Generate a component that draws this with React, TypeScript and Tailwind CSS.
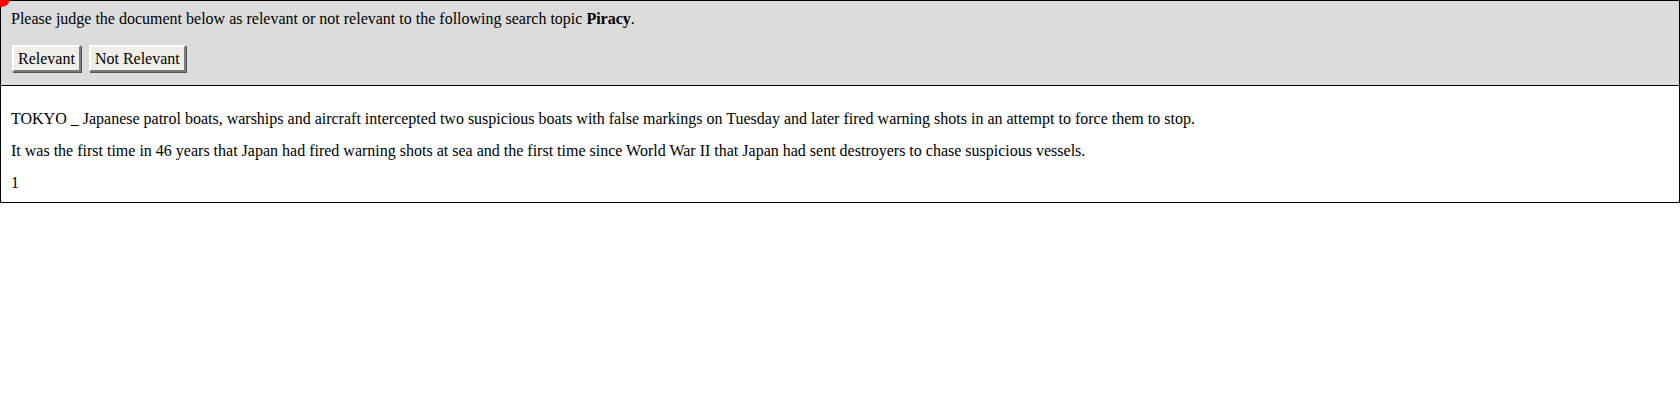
import React from "react";

export default function App() {
  const btn =
    "bg-[#f0ede8] text-black text-[16px] leading-[19px] px-[4px] pt-[2px] pb-[2px] border-2 border-t-[#ffffff] border-l-[#ffffff] border-b-[#7a7a7a] border-r-[#7a7a7a] shadow-[1px_1px_0_#555]";
  return (
    <div className="relative w-[1680px] text-black" style={{ fontFamily: '"Liberation Serif", "Times New Roman", serif' }}>
      <div className="absolute left-[-7px] top-[-10px] w-[17px] h-[17px] rounded-full bg-[#ff0000]" />
      <div className="border border-black bg-[#dcdcdc] px-[10px] pt-[8px] pb-[13px]">
        <p className="text-[16px] leading-[19px]">
          Please judge the document below as relevant or not relevant to the following search topic <b>Piracy</b>.
        </p>
        <div className="flex gap-[8px] mt-[17px] pl-[1px]">
          <button className={btn}>Relevant</button>
          <button className={btn}>Not Relevant</button>
        </div>
      </div>
      <div className="border border-t-0 border-black bg-white px-[10px] pt-[23px] pb-[10px] text-[16px] leading-[19px]">
        <p className="mb-[13px]">
          TOKYO _ Japanese patrol boats, warships and aircraft intercepted two suspicious boats with false markings on Tuesday and later fired warning shots in an attempt to force them to stop.
        </p>
        <p className="mb-[13px]">
          It was the first time in 46 years that Japan had fired warning shots at sea and the first time since World War II that Japan had sent destroyers to chase suspicious vessels.
        </p>
        <p>1</p>
      </div>
    </div>
  );
}
